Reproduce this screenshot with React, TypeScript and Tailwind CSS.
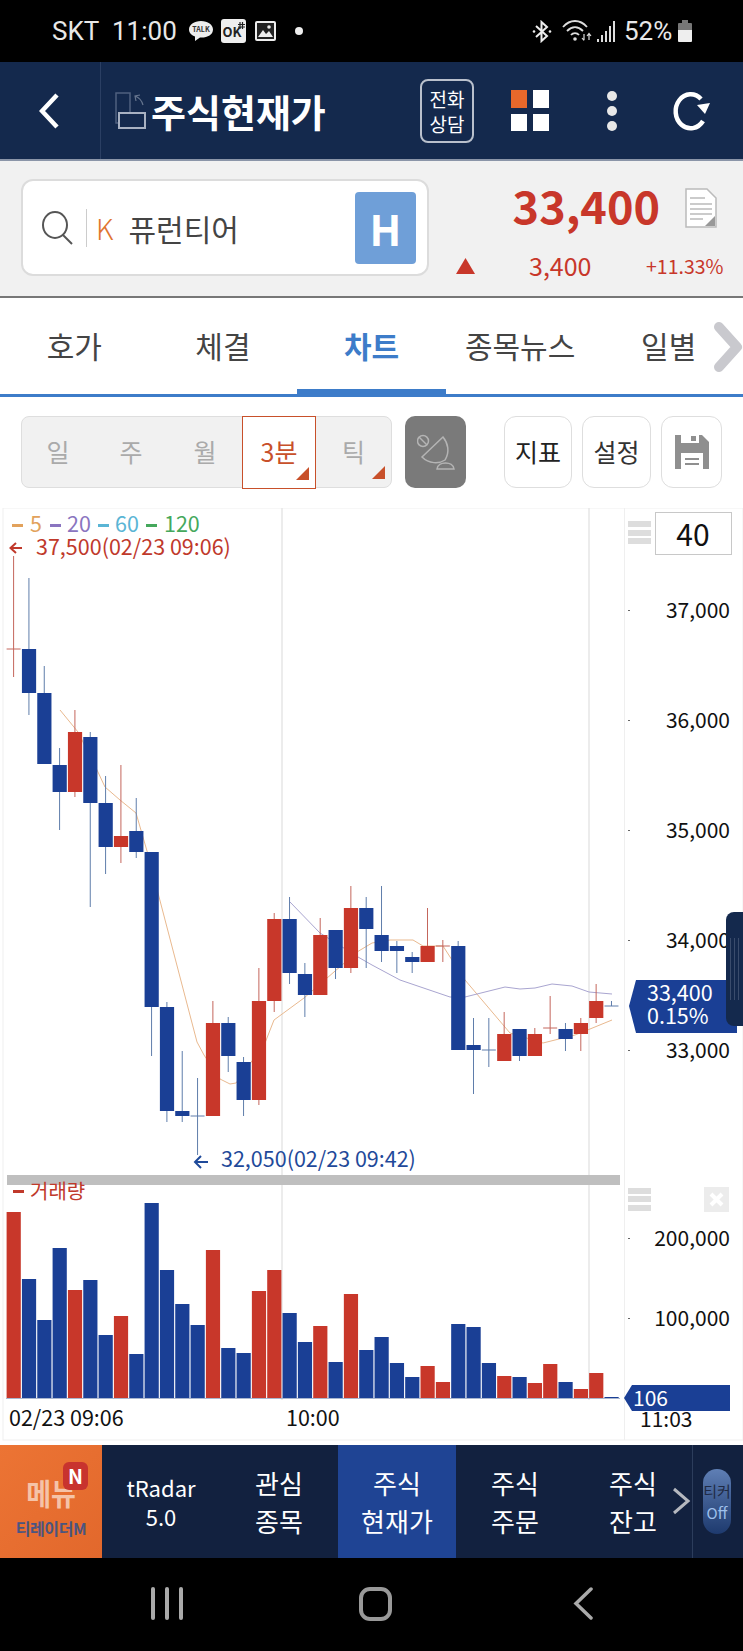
const RED = "#c8372a";
const BLUE = "#1a3f95";

// [color, bodyTop, bodyBottom, wickTop, wickBottom]
const candles: [string, number, number, number, number][] = [
  ["r", 649, 649, 556, 677],
  ["b", 649, 693, 578, 715],
  ["b", 693, 764, 666, 764],
  ["b", 765, 792, 748, 830],
  ["r", 732, 792, 710, 797],
  ["b", 737, 803, 732, 907],
  ["b", 803, 847, 776, 874],
  ["r", 836, 847, 765, 863],
  ["b", 831, 852, 798, 858],
  ["b", 852, 1007, 852, 1056],
  ["b", 1007, 1111, 1002, 1122],
  ["b", 1111, 1116, 1051, 1122],
  ["b", 1116, 1116, 1078, 1155],
  ["r", 1023, 1116, 1001, 1116],
  ["b", 1023, 1056, 1017, 1072],
  ["b", 1062, 1100, 1057, 1116],
  ["r", 1001, 1100, 968, 1105],
  ["r", 919, 1001, 913, 1012],
  ["b", 919, 973, 897, 984],
  ["b", 974, 995, 963, 1017],
  ["r", 935, 995, 918, 995],
  ["b", 930, 968, 930, 979],
  ["r", 908, 968, 886, 973],
  ["b", 908, 929, 897, 968],
  ["b", 935, 951, 886, 962],
  ["b", 946, 951, 941, 973],
  ["b", 957, 962, 952, 973],
  ["r", 946, 962, 908, 962],
  ["r", 946, 946, 940, 962],
  ["b", 946, 1050, 941, 1050],
  ["b", 1045, 1050, 1018, 1094],
  ["b", 1050, 1050, 1018, 1067],
  ["r", 1034, 1061, 1012, 1061],
  ["b", 1029, 1056, 1029, 1061],
  ["r", 1034, 1056, 1028, 1056],
  ["r", 1028, 1028, 996, 1034],
  ["b", 1029, 1039, 1023, 1051],
  ["r", 1023, 1034, 1018, 1051],
  ["r", 1001, 1018, 984, 1023],
  ["b", 1006, 1006, 1001, 1006],
];

const volumes = [
  1212, 1279, 1320, 1248, 1290, 1280, 1335, 1316, 1354, 1203, 1270, 1304, 1325, 1250, 1348, 1353, 1291, 1270, 1313, 1342,
  1326, 1362, 1294, 1350, 1337, 1363, 1377, 1366, 1382, 1324, 1327, 1363, 1376, 1377, 1383, 1364, 1382, 1389, 1373, 1397,
];

const ma5 =
  "60,710 78,732 97,770 105,787 120,800 136,813 147,851 158,893 197,1042 204,1055 220,1079 230,1084 236,1083 265,1043 274,1020 304,998 357,952 372,943 390,940 413,940 423,946 443,946 452,960 465,980 510,1033 543,1043 575,1035 590,1029 612,1020";
const ma20 =
  "290,902 320,933 358,957 372,965 400,980 450,997 465,997 505,987 520,989 535,988 552,984 572,986 589,992 612,994";

const candleX = (i: number) => 13.6 + 15.33 * i;

function PriceChart() {
  return (
    <svg width="743" height="937" viewBox="0 508 743 937" className="block">
      <rect x="3" y="508" width="740" height="932" fill="#fff" stroke="#efefef" />
      <line x1="282" y1="508" x2="282" y2="1400" stroke="#e6e6e6" strokeWidth="1.5" />
      <line x1="589" y1="508" x2="589" y2="1400" stroke="#e6e6e6" strokeWidth="1.5" />
      <line x1="624.5" y1="508" x2="624.5" y2="1440" stroke="#efefef" />

      <polyline points={ma5} fill="none" stroke="#e9b98f" strokeWidth="1" />
      <polyline points={ma20} fill="none" stroke="#a9a5d0" strokeWidth="1" />

      {candles.map(([c, top, bottom, wickTop, wickBottom], i) => {
        const x = candleX(i);
        const doji = top === bottom;
        return (
          <g key={i}>
            <line x1={x} x2={x} y1={wickTop} y2={wickBottom} stroke={c === "r" ? "#c4665c" : "#5f7dab"} />
            {doji ? (
              <line x1={x - 7} x2={x + 7} y1={top} y2={top} stroke={c === "r" ? "#c4665c" : "#5f7dab"} />
            ) : (
              <rect x={x - 7} y={top} width="14.2" height={bottom - top} fill={c === "r" ? RED : BLUE} />
            )}
          </g>
        );
      })}

      {/* legend */}
      <g className="text-[21.5px]">
        <rect x="12" y="524" width="11" height="3" fill="#e2a25c" />
        <text x="30" y="532" fill="#e2a25c">5</text>
        <rect x="50" y="524" width="11" height="3" fill="#8a75c0" />
        <text x="67" y="532" fill="#8a75c0">20</text>
        <rect x="98" y="524" width="11" height="3" fill="#5ab5d5" />
        <text x="115" y="532" fill="#5ab5d5">60</text>
        <rect x="146" y="524" width="11" height="3" fill="#45a85c" />
        <text x="164" y="532" fill="#45a85c">120</text>
      </g>
      <path d="M22 548 H11 M16 543 L10.500 548 L16 553" fill="none" stroke="#c0392b" strokeWidth="2" />
      <text x="36" y="555" fill="#c0392b" className="text-[21.5px]">37,500(02/23 09:06)</text>

      <path d="M208 1162 H196 M201 1156 L195 1162 L201 1168" fill="none" stroke="#1f4a9a" strokeWidth="2" />
      <text x="221" y="1167" fill="#1f4a9a" className="text-[21.5px]">32,050(02/23 09:42)</text>

      {/* price axis */}
      {[610, 720, 830, 940, 1050].map((y, i) => (
        <g key={y}>
          <rect x="628" y={y} width="2" height="1" fill="#666" />
          <text x="730" y={y + 8} textAnchor="end" fill="#111" className="text-[21px]">
            {["37,000", "36,000", "35,000", "34,000", "33,000"][i]}
          </text>
        </g>
      ))}

      <rect x="628" y="521" width="23" height="6" fill="#ddd" />
      <rect x="628" y="530" width="23" height="6" fill="#ddd" />
      <rect x="628" y="538" width="23" height="6" fill="#ddd" />
      <rect x="655.500" y="512.500" width="76" height="42" fill="#fff" stroke="#c8c8c8" />
      <text x="693" y="546" textAnchor="middle" fill="#111" className="text-[30px]">40</text>

      <polygon points="629,1006 636,980 737,980 737,1033 636,1033" fill={BLUE} />
      <text x="647" y="1001" fill="#fff" className="text-[21.5px]">33,400</text>
      <text x="647" y="1024" fill="#fff" className="text-[21.5px]">0.15%</text>

      {/* volume pane */}
      <rect x="7" y="1175" width="613" height="10" fill="#bfbfbf" />
      <rect x="13" y="1190" width="11" height="3" fill="#c0392b" />
      <text x="30" y="1199" fill="#c0392b" className="text-[20px]">거래량</text>

      {volumes.map((top, i) => (
        <rect
          key={i}
          x={candleX(i) - 7}
          y={top}
          width="14.2"
          height={1398 - top}
          fill={candles[i][0] === "r" ? RED : BLUE}
        />
      ))}
      <line x1="6" y1="1398.500" x2="620" y2="1398.500" stroke="#a9b6cf" />

      <rect x="628" y="1188" width="23" height="6" fill="#ddd" />
      <rect x="628" y="1196" width="23" height="6" fill="#ddd" />
      <rect x="628" y="1205" width="23" height="6" fill="#ddd" />
      <rect x="704" y="1187" width="25" height="25" fill="#ececec" />
      <path d="M711 1194 L722 1205 M722 1194 L711 1205" stroke="#fff" strokeWidth="4" />

      {[1238, 1318].map((y, i) => (
        <g key={y}>
          <rect x="628" y={y} width="2" height="1" fill="#666" />
          <text x="730" y={y + 8} textAnchor="end" fill="#111" className="text-[21px]">
            {["200,000", "100,000"][i]}
          </text>
        </g>
      ))}

      <text x="640" y="1427" fill="#111" className="text-[21px]">11:03</text>
      <polygon points="624,1398 632,1385 730,1385 730,1411 632,1411" fill={BLUE} />
      <text x="633" y="1406" fill="#fff" className="text-[21px]">106</text>

      <text x="9" y="1426" fill="#111" className="text-[21.5px]">02/23 09:06</text>
      <text x="286" y="1426" fill="#111" className="text-[21.5px]">10:00</text>
    </svg>
  );
}

function StatusBar() {
  return (
    <div className="flex h-[62px] items-center bg-black text-[26px] text-[#e8e8e8]">
      <span className="ml-[52px] w-[60px] font-['Roboto',sans-serif]">SKT</span>
      <span className="w-[77px] font-['Roboto',sans-serif]">11:00</span>
      <svg width="24" height="22" viewBox="0 0 24 22">
        <path d="M12 1 C5 1 0 5 0 9.500 C0 13 3 15.500 6 16.500 L6 21 L11 17.500 C18 18 24 15 24 9.500 C24 5 19 1 12 1 Z" fill="#eee" />
        <text x="12" y="12" textAnchor="middle" fill="#333" className="text-[7px] font-bold">TALK</text>
      </svg>
      <svg className="ml-[8px]" width="25" height="24" viewBox="0 0 25 24">
        <rect width="25" height="24" rx="3" fill="#eee" />
        <text x="1.500" y="18" fill="#222" className="text-[13px] font-bold">OK</text>
        <path d="M19 3 V10 M21.500 3 V10 M17 5.500 H24 M17 8 H24" stroke="#222" strokeWidth="1.200" />
      </svg>
      <svg className="ml-[9px]" width="21" height="20" viewBox="0 0 21 20">
        <rect width="21" height="20" rx="2" fill="#eee" />
        <rect x="2" y="2" width="17" height="16" fill="#222" />
        <path d="M3 16 L8 9 L11 13 L14 10 L18 16 Z" fill="#eee" />
        <circle cx="14" cy="6" r="1.800" fill="#eee" />
      </svg>
      <span className="ml-[19px] size-[8px] rounded-full bg-[#eee]" />

      <svg className="ml-[229px]" width="20" height="23" viewBox="0 0 20 23" fill="none" stroke="#eee" strokeWidth="2">
        <path d="M4 6 L15 16 L9.500 21 V2 L15 7 L4 17" />
        <circle cx="2" cy="11.500" r="1.300" fill="#eee" stroke="none" />
        <circle cx="18" cy="11.500" r="1.300" fill="#eee" stroke="none" />
      </svg>
      <svg className="ml-[10px]" width="30" height="22" viewBox="0 0 30 22" fill="none" stroke="#ddd" strokeWidth="1.800">
        <path d="M1 7 C8 -1 18 -1 25 7" />
        <path d="M5 11 C10 6 16 6 21 11" />
        <path d="M9 15 C11 12.500 15 12.500 17 15" />
        <circle cx="13" cy="19" r="1.800" fill="#ddd" stroke="none" />
        <path d="M22 14 V20 M20 18 L22 20.500 M27 20 V14 M25 16 L27 13.500 L29 16" strokeWidth="1.200" />
      </svg>
      <div className="ml-[5px] flex h-[21px] items-end gap-[2px]">
        <span className="h-[3px] w-[2px] bg-[#ddd]" />
        <span className="h-[7px] w-[2px] bg-[#ddd]" />
        <span className="h-[11px] w-[2px] bg-[#ddd]" />
        <span className="h-[16px] w-[2px] bg-[#ddd]" />
        <span className="h-[21px] w-[2px] bg-[#ddd]" />
      </div>
      <span className="ml-[9px] w-[54px] font-['Roboto',sans-serif]">52%</span>
      <div className="flex h-[22px] w-[14px] flex-col items-center">
        <span className="h-[3px] w-[6px] bg-[#777]" />
        <span className="h-[7px] w-full rounded-t-[1px] bg-[#777]" />
        <span className="h-[12px] w-full rounded-b-[1px] bg-[#eee]" />
      </div>
    </div>
  );
}

function AppHeader() {
  return (
    <header className="flex h-[99px] items-center border-b-2 border-[#8b95a8] bg-[#14294d] text-white">
      <div className="flex h-full w-[101px] items-center border-r border-[#2b3f63] pl-[39px]">
        <svg width="21" height="36" viewBox="0 0 21 36" fill="none">
          <path d="M18 2 L3 18 L18 34" stroke="#fff" strokeWidth="4.500" />
        </svg>
      </div>
      <svg className="ml-[14px]" width="31" height="38" viewBox="0 0 31 38" fill="none">
        <rect x="1" y="1" width="14" height="30" stroke="#4f607f" strokeWidth="1.500" />
        <path d="M20 4 C25 6 27 9 28 13 M21 9 L20 4 L25 3" stroke="#66758f" strokeWidth="1.200" />
        <rect x="4" y="21" width="26" height="15" stroke="#a8b1c2" strokeWidth="2" fill="#14294d" />
      </svg>
      <h1 className="ml-[5px] w-[269px] text-[38px] font-bold">주식현재가</h1>
      <div className="flex h-[64px] w-[54px] flex-col items-center justify-center rounded-[8px] border-2 border-[#b9c0cc] text-[19px] leading-[25px]">
        <span>전화</span>
        <span>상담</span>
      </div>
      <div className="ml-[37px] grid h-[41px] w-[38px] grid-cols-2 gap-x-[6px] gap-y-[6px]">
        <span className="bg-[#e8682b]" />
        <span className="bg-white" />
        <span className="bg-white" />
        <span className="bg-white" />
      </div>
      <div className="ml-[58px] flex flex-col gap-[5px]">
        <span className="size-[10px] rounded-full bg-[#e8e8e8]" />
        <span className="size-[10px] rounded-full bg-[#e8e8e8]" />
        <span className="size-[10px] rounded-full bg-[#e8e8e8]" />
      </div>
      <svg className="ml-[53px]" width="40" height="42" viewBox="670 90 40 42" fill="none">
        <path d="M703 121 A15 17 0 1 1 701 99" stroke="#fff" strokeWidth="4.500" />
        <polygon points="697,105 710,103 705,114" fill="#fff" />
      </svg>
    </header>
  );
}

function StockBar() {
  return (
    <section className="flex h-[137px] items-start border-b-2 border-[#777] bg-[#f1f1f1]">
      <div className="ml-[21px] mt-[18px] flex h-[97px] w-[408px] items-center rounded-[12px] border-2 border-[#dcdcdc] bg-white">
        <svg className="ml-[19px]" width="31" height="34" viewBox="0 0 31 34" fill="none" stroke="#555" strokeWidth="2">
          <ellipse cx="13" cy="14" rx="12" ry="13" />
          <path d="M21 24 L30 33" />
        </svg>
        <span className="ml-[13px] h-[38px] w-px bg-[#ccc]" />
        <span className="ml-[9px] text-[28px] font-light text-[#e0752f]">K</span>
        <span className="ml-[15px] text-[30px] leading-none text-[#444]">퓨런티어</span>
        <span className="ml-auto mr-[11px] flex h-[72px] w-[61px] items-center justify-center rounded-[4px] bg-[#6f9fd8] text-[42px] font-bold text-white">
          H
        </span>
      </div>
      <div className="flex-1">
        <div className="mt-[14px] flex h-[58px] items-center justify-end">
          <span className="text-[45px] font-bold leading-none text-[#c8372a]">33,400</span>
          <svg className="ml-[25px] mr-[26px] mt-[8px]" width="32" height="40" viewBox="0 0 32 40">
            <path d="M1 1 H22 L31 10 V39 H1 Z" fill="#fff" stroke="#bbb" strokeWidth="1.500" />
            <path d="M5 10 H20 M5 16 H27 M5 21 H27 M5 26 H27 M5 31 H18" stroke="#bbb" strokeWidth="1.500" />
            <path d="M30 28 V38 H20 Z" fill="#999" />
          </svg>
        </div>
        <div className="mt-[20px] flex items-center">
          <svg className="ml-[27px]" width="19" height="16" viewBox="0 0 19 16">
            <polygon points="9.500,0 19,16 0,16" fill="#c8372a" />
          </svg>
          <span className="ml-[54px] w-[117px] text-[25px] leading-none text-[#c8372a]">3,400</span>
          <span className="text-[19.5px] leading-none text-[#c8372a]">+11.33%</span>
        </div>
      </div>
    </section>
  );
}

function Tabs() {
  const tabs = ["호가", "체결", "차트", "종목뉴스", "일별"];
  return (
    <nav className="relative grid h-[99px] grid-cols-5 border-b-[3px] border-[#3d7cc9] bg-white pb-[1px]">
      {tabs.map((t) => (
        <div
          key={t}
          className={
            t === "차트"
              ? "relative flex items-center justify-center text-[30px] font-bold text-[#3d7cc9]"
              : "flex items-center justify-center text-[30px] text-[#444]"
          }
        >
          {t}
          {t === "차트" && <span className="absolute bottom-[-3px] left-0 right-0 h-[7px] bg-[#3d7cc9]" />}
        </div>
      ))}
      <svg className="absolute left-[713px] top-[24px]" width="30" height="50" viewBox="0 0 30 50" fill="none">
        <path d="M6 5 L24 25 L6 45" stroke="#c9c9ce" strokeWidth="10" strokeLinecap="round" strokeLinejoin="round" />
      </svg>
    </nav>
  );
}

function Toolbar() {
  const corner = (
    <svg className="absolute bottom-[8px] right-[6px]" width="13" height="13" viewBox="0 0 13 13">
      <polygon points="13,0 13,13 0,13" fill="#c8502a" />
    </svg>
  );
  return (
    <div className="flex h-[111px] items-start bg-white pt-[19px]">
      <div className="ml-[21px] flex h-[72px] w-[371px] rounded-[8px] border-[1.5px] border-[#dedede] bg-[#f1f1f1] text-[25px] text-[#aaa]">
        <span className="flex w-[72px] items-center justify-center">일</span>
        <span className="flex w-[74px] items-center justify-center">주</span>
        <span className="flex w-[74px] items-center justify-center">월</span>
        <span className="relative -my-[1.5px] flex w-[74px] items-center justify-center border-[1.5px] border-[#c8502a] bg-white text-[#c8502a]">
          3분
          {corner}
        </span>
        <span className="relative flex flex-1 items-center justify-center">
          틱
          {corner}
        </span>
      </div>
      <div className="ml-[13px] flex h-[72px] w-[61px] items-center justify-center rounded-[10px] bg-[#7a7a7a]">
        <svg width="38" height="38" viewBox="418 431 38 38" fill="none" stroke="#b4b4b4" strokeWidth="1.500">
          <circle cx="424" cy="439" r="5.500" />
          <path d="M420 435 L428 443" />
          <path d="M444 435 L423 455 C430 462 440 462 446 458 C451 450 449 441 444 435 Z" />
          <path d="M438 467 C439 459 454 459 455 467 Z" />
        </svg>
      </div>
      <div className="ml-[38px] flex h-[72px] w-[68px] items-center justify-center rounded-[12px] border-[1.5px] border-[#dedede] text-[25px] text-[#222]">
        지표
      </div>
      <div className="ml-[10px] flex h-[72px] w-[69px] items-center justify-center rounded-[12px] border-[1.5px] border-[#dedede] text-[25px] text-[#333]">
        설정
      </div>
      <div className="ml-[10px] flex h-[72px] w-[61px] items-center justify-center rounded-[12px] border-[1.5px] border-[#dedede]">
        <svg width="34" height="34" viewBox="0 0 34 34">
          <path d="M0 0 H27 L34 7 V34 H0 Z" fill="#8f8f8f" />
          <rect x="6" y="0" width="18" height="8" fill="#fff" />
          <rect x="16" y="1" width="5" height="5" fill="#8f8f8f" />
          <rect x="6" y="18" width="22" height="16" fill="#fff" />
          <rect x="10" y="23" width="14" height="2" fill="#8f8f8f" />
          <rect x="10" y="28" width="14" height="2" fill="#8f8f8f" />
        </svg>
      </div>
    </div>
  );
}

function FooterMenu() {
  const items = [
    ["관심", "종목"],
    ["주식", "현재가"],
    ["주식", "주문"],
    ["주식", "잔고"],
  ];
  return (
    <footer className="flex h-[113px] bg-[#12213f] text-white">
      <div className="relative flex w-[102px] flex-col items-center bg-gradient-to-br from-[#ec7434] to-[#e2682c]">
        <span className="mt-[28px] scale-y-110 text-[27px] font-bold leading-[40px] text-[#f5c3a8]">메뉴</span>
        <span className="absolute left-[63px] top-[17px] flex h-[28px] w-[25px] items-center justify-center rounded-[6px] bg-[#c8332e] text-[20px] font-bold">
          N
        </span>
        <span className="mt-[5px] text-[16px] font-bold leading-[20px] tracking-tight text-[#4a5580]">티레이더M</span>
      </div>
      <div className="flex w-[118px] flex-col items-center justify-center text-[22px] leading-[29px]">
        <span>tRadar</span>
        <span>5.0</span>
      </div>
      {items.map(([a, b], i) => (
        <div
          key={i}
          className={
            i === 1
              ? "flex w-[118px] flex-col items-center justify-center bg-[#1f4494] text-[26px] leading-[38px]"
              : "flex w-[118px] flex-col items-center justify-center text-[26px] leading-[38px]"
          }
        >
          <span>{a}</span>
          <span>{b}</span>
        </div>
      ))}
      <div className="relative flex flex-1 items-center border-l border-[#2c3d5c]">
        <svg className="absolute left-[-22px] top-[42px]" width="20" height="28" viewBox="0 0 20 28" fill="none">
          <path d="M3 2 L17 14 L3 26" stroke="#b5b8bf" strokeWidth="3" />
        </svg>
        <div className="ml-[10px] flex h-[65px] w-[28px] flex-col items-center justify-center rounded-full bg-gradient-to-b from-[#5f7fb5] to-[#1e3a6e] text-[15px] leading-[22px]">
          <span className="text-[#1f2a44]">티커</span>
          <span className="text-[#9ec0ec]">Off</span>
        </div>
      </div>
    </footer>
  );
}

function NavBar() {
  return (
    <div className="flex h-[93px] items-start bg-black pt-[29px]">
      <div className="ml-[151px] flex h-[33px] gap-[10px]">
        <span className="w-[4px] rounded-full bg-[#aaa]" />
        <span className="w-[4px] rounded-full bg-[#aaa]" />
        <span className="w-[4px] rounded-full bg-[#aaa]" />
      </div>
      <span className="ml-[176px] h-[34px] w-[33px] rounded-[11px] border-[4px] border-[#999]" />
      <svg className="ml-[181px]" width="20" height="33" viewBox="0 0 20 33" fill="none">
        <path d="M18 2 L3 16.500 L18 31" stroke="#aaa" strokeWidth="3.500" strokeLinecap="round" />
      </svg>
    </div>
  );
}

export default function App() {
  return (
    <div className="w-[743px] font-['Noto_Sans_CJK_KR','Noto_Sans',sans-serif]">
      <StatusBar />
      <AppHeader />
      <StockBar />
      <Tabs />
      <Toolbar />
      <div className="relative h-[937px] bg-white">
        <PriceChart />
        <div className="absolute left-[726px] top-[404px] flex h-[114px] w-[17px] items-center justify-center gap-[3px] rounded-l-[8px] bg-[#14294d]">
          <span className="h-[62px] w-px bg-[#3a4c6c]" />
          <span className="h-[62px] w-px bg-[#3a4c6c]" />
          <span className="h-[62px] w-px bg-[#3a4c6c]" />
        </div>
      </div>
      <FooterMenu />
      <NavBar />
    </div>
  );
}
